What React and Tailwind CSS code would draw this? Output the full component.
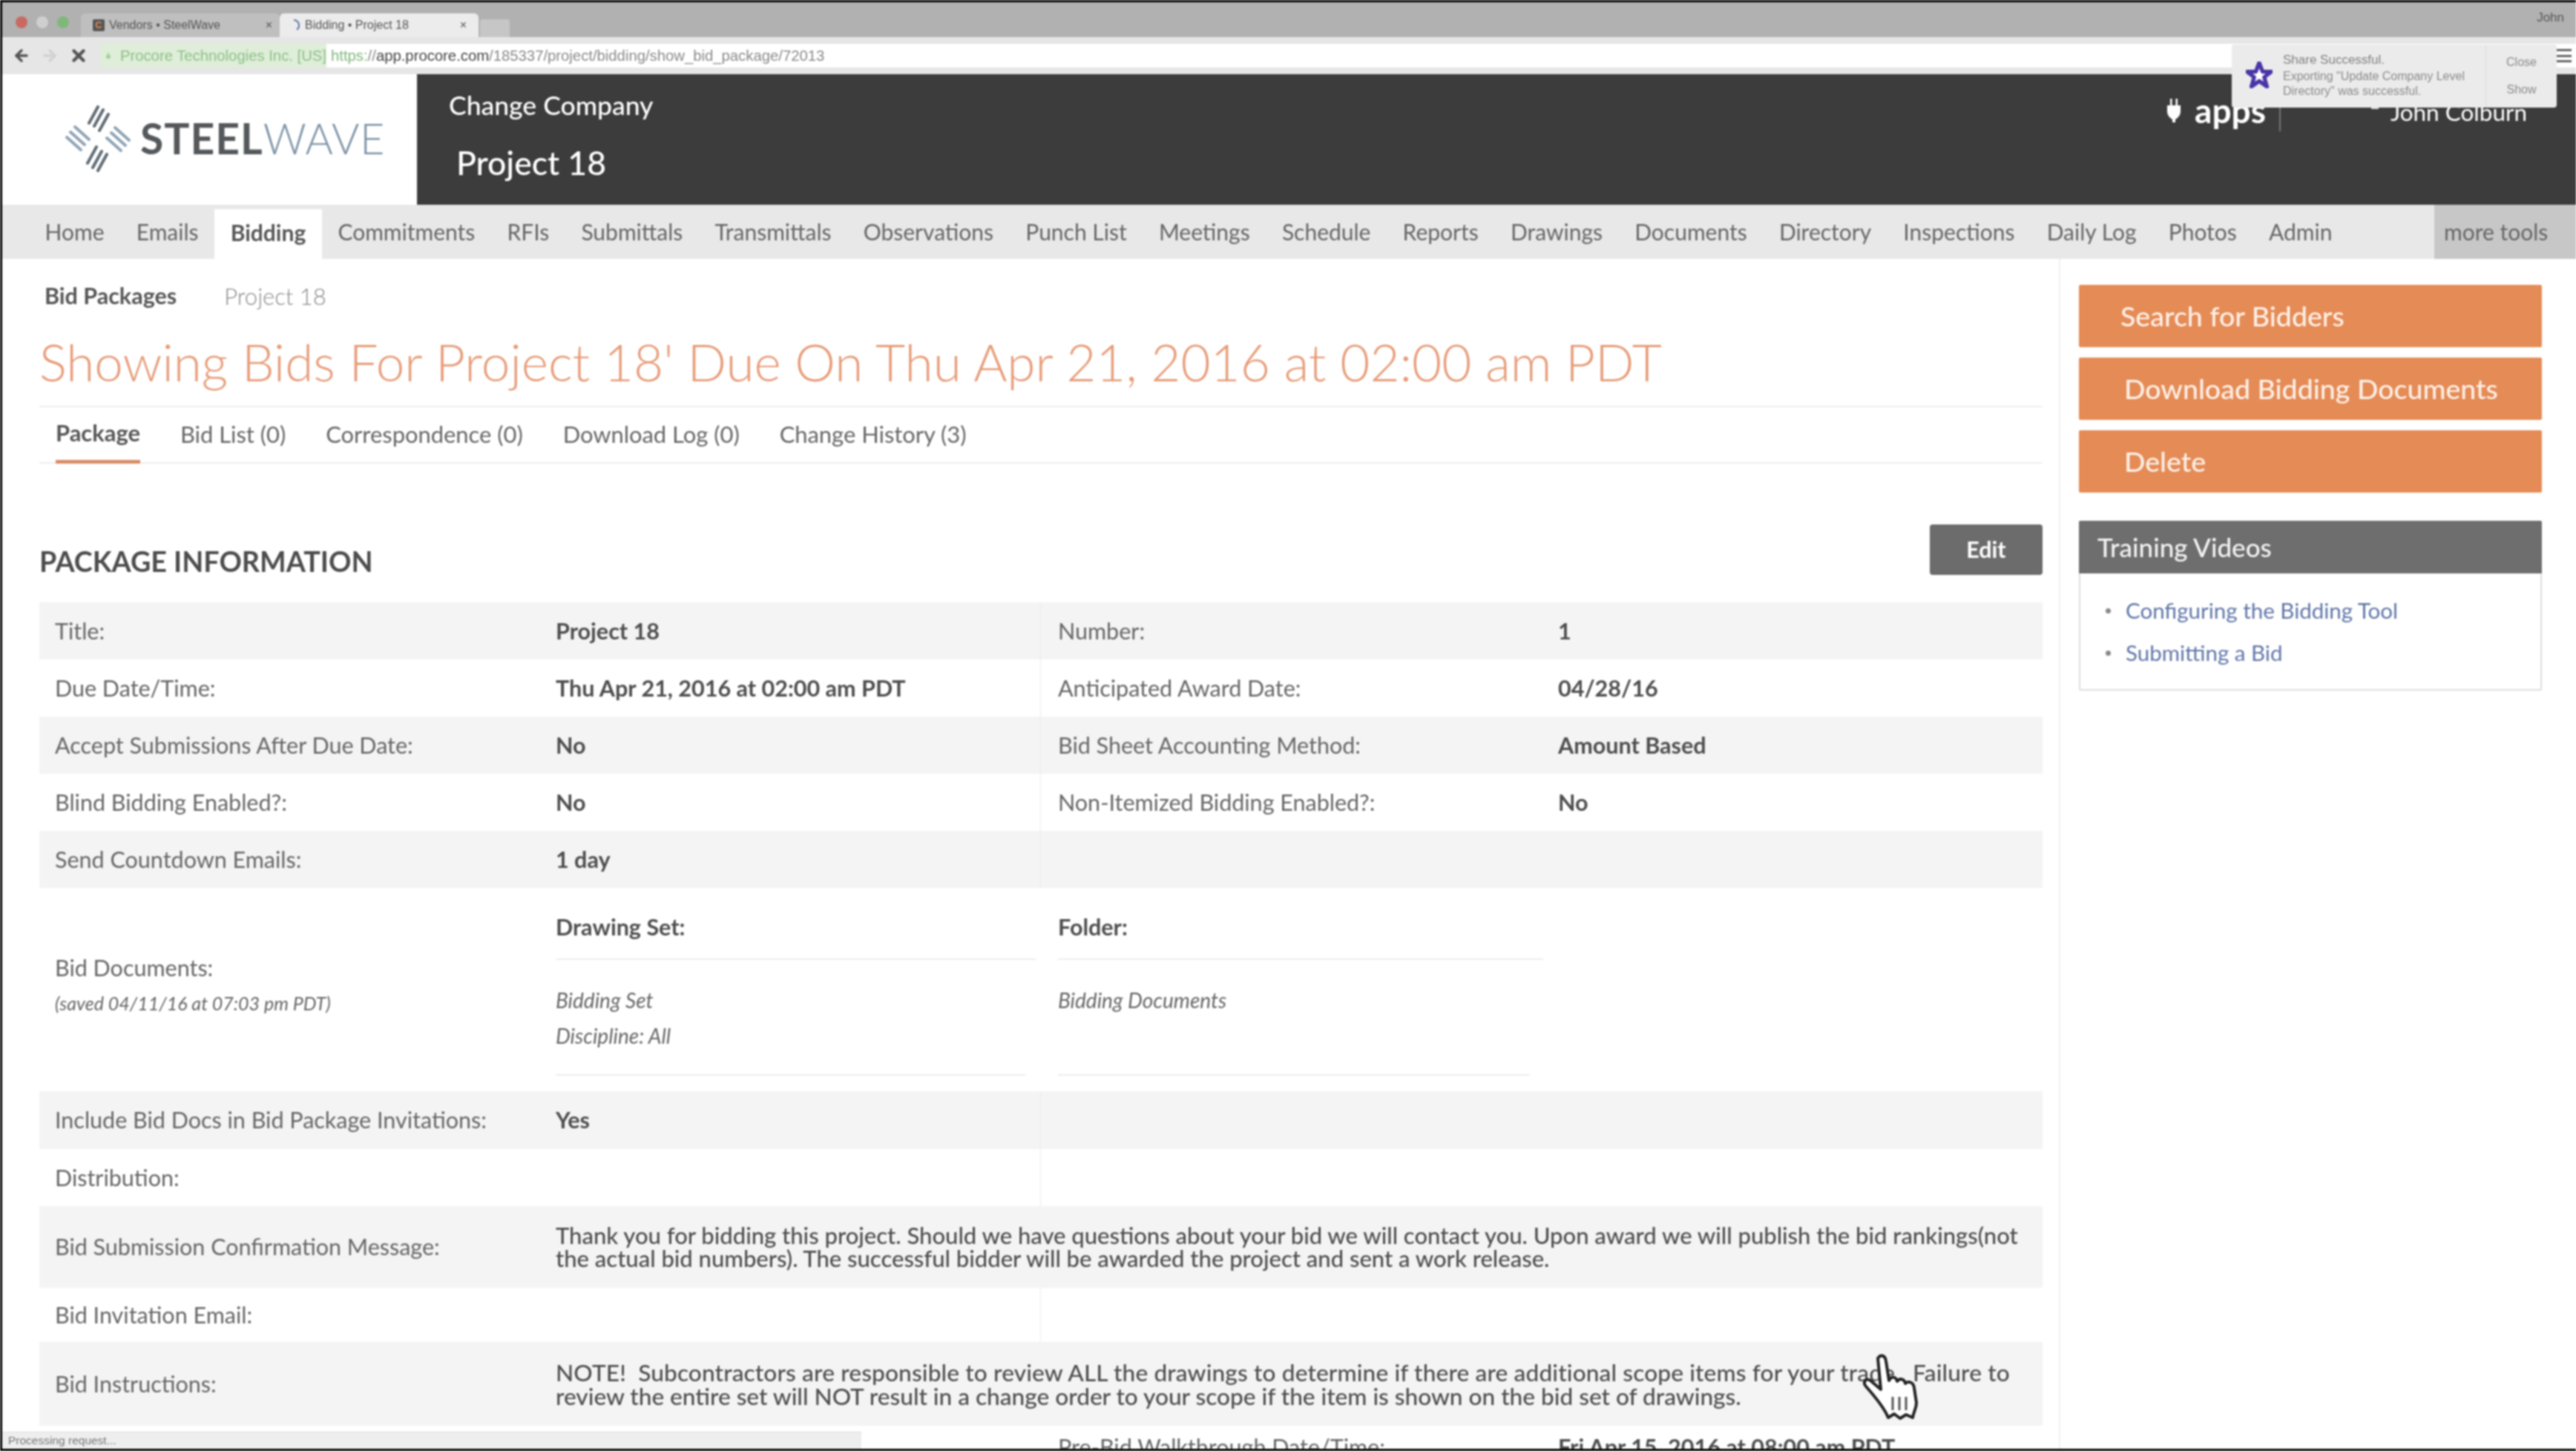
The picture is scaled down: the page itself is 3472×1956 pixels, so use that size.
import { ArrowLeft, ArrowRight, X } from "lucide-react";

const nav = ["Home","Emails","Bidding","Commitments","RFIs","Submittals","Transmittals","Observations","Punch List","Meetings","Schedule","Reports","Drawings","Documents","Directory","Inspections","Daily Log","Photos","Admin"];

function Logo() {
  return (
    <svg width="90" height="90" viewBox="0 0 90 90" className="shrink-0">
      <g stroke="#5f6b75" strokeWidth="4" strokeLinecap="round">
        <path d="M45 2 L33 24 M52 6 L40 28 M59 12 L47 34" />
        <path d="M45 88 L57 66 M38 84 L50 62 M31 78 L43 56" />
      </g>
      <g stroke="#8fa3b5" strokeWidth="4" strokeLinecap="round">
        <path d="M3 43 L22 60 M8 36 L27 53 M14 29 L33 46" />
        <path d="M87 47 L68 30 M82 54 L63 37 M76 61 L57 44" />
      </g>
    </svg>
  );
}

function Row({ gray, h = "h-[77px]", label, value, label2, value2 }) {
  return (
    <div className={`flex items-center ${h} ${gray ? "bg-[#f4f4f4]" : "bg-white"}`}>
      <div className="w-[696px] pl-[21px] shrink-0 text-[#666]">{label}</div>
      <div className="w-[654px] shrink-0 font-bold text-[#4d4d4d] self-stretch flex items-center border-r-[1px] border-[#ececec]">{value}</div>
      <div className="w-[697px] pl-[23px] shrink-0 text-[#666]">{label2}</div>
      <div className="font-bold text-[#4d4d4d]">{value2}</div>
    </div>
  );
}

function Hand() {
  return (
    <svg width="88" height="90" viewBox="0 0 88 90" className="absolute left-[2507px] top-[1825px]">
      <path d="M24 6 C28 0 34 2 35 10 L39 36 C42 30 48 30 50 37 C54 32 60 34 61 40 C65 36 72 38 73 46 L76 66 C76 74 72 78 71 86 L62 82 L54 87 L46 81 L38 86 C34 76 24 62 8 44 C3 38 8 32 14 36 L28 48 Z" fill="#fff" stroke="#222" strokeWidth="4" strokeLinejoin="round" />
      <path d="M44 58 V76 M53 58 V76 M62 58 V76" stroke="#555" strokeWidth="3" />
    </svg>
  );
}

export default function App() {
  return (
    <div className="relative w-[3472px] h-[1956px] overflow-hidden bg-white font-['Lato','Noto_Sans',sans-serif] text-[30.500px] blur-[1.200px]">
      <div className="border-t-[3px] border-l-[3px] border-b-[3px] border-black h-[1956px] flex flex-col overflow-hidden">
        {/* Browser chrome */}
        <div className="h-[47px] bg-[#b1b1b1] flex items-end pl-[18px] font-['Liberation_Sans',sans-serif] text-[16px] text-[#555] shrink-0">
          <div className="flex gap-[12px] w-[88px] pb-[12px]">
            <span className="size-[16px] rounded-full bg-[#c96a62]" />
            <span className="size-[16px] rounded-full bg-[#cfcfcf]" />
            <span className="size-[16px] rounded-full bg-[#7fb87a]" />
          </div>
          <div className="w-[268px] h-[32px] bg-[#bfbfbf] rounded-t-[6px] flex items-center pl-[16px] pr-[10px] justify-between">
            <span className="flex items-center gap-[6px]"><span className="size-[16px] bg-[#555] rounded-[2px] text-[#e58b56] text-[13px] leading-[16px] font-bold text-center">C</span>Vendors • SteelWave</span><span>×</span>
          </div>
          <div className="w-[268px] h-[32px] bg-[#ececec] rounded-t-[6px] flex items-center pl-[16px] pr-[16px] justify-between">
            <span className="flex items-center gap-[4px]">
              <svg width="14" height="16" viewBox="0 0 14 16"><path d="M3 1a7 7 0 0 1 7 7 7 7 0 0 1-3 6" fill="none" stroke="#5f75a8" strokeWidth="2" /></svg>
              Bidding • Project 18
            </span><span>×</span>
          </div>
          <div className="w-[40px] h-[24px] ml-[2px] bg-[#c6c6c6] rounded-t-[4px]" />
          <div className="ml-auto mr-[16px] pb-[14px] text-[17px]">John</div>
        </div>
        <div className="h-[50px] bg-[#e6e6e6] flex items-center font-['Liberation_Sans',sans-serif] shrink-0">
          <div className="w-[132px] flex items-center gap-[14px] pl-[14px] text-[#555]">
            <ArrowLeft size={24} strokeWidth={3.5} />
            <ArrowRight size={24} strokeWidth={3.5} className="text-[#d2d2d2]" />
            <X size={26} strokeWidth={4} />
          </div>
          <div className="flex-1 h-[32px] bg-white flex items-center text-[20.300px]">
            <div className="w-[305px] h-full bg-[#deeed8] flex items-center pl-[8px] gap-[13px] text-[#8fbf8a] whitespace-nowrap">
              <svg width="14" height="20" viewBox="0 0 14 20"><rect x="1" y="8" width="12" height="11" rx="1" fill="#9ccc92" /><path d="M4 8V5a3 3 0 0 1 6 0v3" fill="none" stroke="#9ccc92" strokeWidth="2" /></svg>
              Procore Technologies Inc. [US]
            </div>
            <span className="ml-[6px] text-[#8a8a8a]"><span className="text-[#7fb87a]">https:</span>//<span className="text-[#444]">app.procore.com</span>/185337/project/bidding/show_bid_package/72013</span>
          </div>
        </div>
        {/* Header */}
        <div className="h-[176px] flex shrink-0">
          <div className="w-[559px] bg-white flex items-center pl-[84px] gap-[12px] shrink-0 pb-[2px]">
            <Logo />
            <span className="text-[57px] tracking-[1px] font-bold text-[#55595c]">STEEL<span className="font-light text-[#7d93a6]">WAVE</span></span>
          </div>
          <div className="flex-1 bg-[#3c3c3d] flex text-white pr-[66px]">
            <div className="pl-[43px] pt-[17px]">
              <div className="text-[35.500px] leading-[50px] font-medium">Change Company</div>
              <div className="text-[44.500px] leading-[60px] pl-[10px] mt-[22px] font-medium">Project 18</div>
            </div>
            <div className="ml-auto flex items-start pt-[23px] gap-[18px]">
              <svg width="20" height="32" viewBox="0 0 20 32" className="mt-[10px]"><path d="M5 0h2.500v9h5V0H15v9h4v8c0 6-4 9-7 11v4H8v-4C5 26 1 23 1 17V9h4z" fill="#fff" /></svg>
              <span className="text-[46px] leading-[52px] font-bold">apps</span>
              <span className="w-[2px] h-[36px] bg-[#777] mt-[18px]" />
              <span className="size-[10px] bg-[#ddd] ml-[104px] mt-[14px]" />
              <span className="text-[31.500px] leading-[52px] -ml-[2px] mt-[2px]">John Colburn</span>
            </div>
          </div>
        </div>
        {/* Nav */}
        <div className="h-[73px] bg-[#e8e8e8] flex text-[#666] text-[30px] shrink-0 pl-[36px]">
          {nav.map((n) => (
            <div key={n} className={n === "Bidding" ? "mt-[6px] -mb-[2px] bg-white font-bold px-[21.600px] flex items-center text-[#555] pb-[6px]" : "px-[21.600px] flex items-center whitespace-nowrap"}>{n}</div>
          ))}
          <div className="ml-auto w-[191px] bg-[#c7c7c7] flex items-center pl-[13px]">more tools</div>
        </div>
        {/* Body */}
        <div className="flex flex-1 min-h-0">
          <div className="w-[2774px] shrink-0 border-r-[2px] border-[#efefef] pl-[50px] pr-[22px]">
            <div className="flex items-center h-[60px] mt-[20px] pl-[7px]">
              <span className="font-bold text-[#555]">Bid Packages</span>
              <span className="ml-[64px] font-light text-[#888] text-[31px]">Project 18</span>
            </div>
            <div className="h-[120px] flex items-center border-b-[2px] border-[#eee] font-light text-[69.200px] text-[#e79a76] whitespace-nowrap">Showing Bids For Project 18' Due On Thu Apr 21, 2016 at 02:00 am PDT</div>
            <div className="flex h-[76px] border-b-[2px] border-[#eee] pl-[22px] gap-[54px] text-[#666] text-[30.900px]">
              <div className="font-bold text-[#555] h-[76px] border-b-[5px] border-[#d98d66] flex items-center">Package</div>
              <div className="flex items-center">Bid List (0)</div>
              <div className="flex items-center">Correspondence (0)</div>
              <div className="flex items-center">Download Log (0)</div>
              <div className="flex items-center">Change History (3)</div>
            </div>
            <div className="flex items-end justify-between h-[187px] pb-[37px]">
              <div className="text-[37.700px] font-bold text-[#4d4d4d] leading-[44px] mb-[-4px]">PACKAGE INFORMATION</div>
              <div className="w-[152px] h-[68px] bg-[#6c6c6c] rounded-[4px] text-white font-bold flex items-center justify-center">Edit</div>
            </div>
            <Row gray label="Title:" value="Project 18" label2="Number:" value2="1" />
            <Row label="Due Date/Time:" value="Thu Apr 21, 2016 at 02:00 am PDT" label2="Anticipated Award Date:" value2="04/28/16" />
            <Row gray label="Accept Submissions After Due Date:" value="No" label2="Bid Sheet Accounting Method:" value2="Amount Based" />
            <Row label="Blind Bidding Enabled?:" value="No" label2="Non-Itemized Bidding Enabled?:" value2="No" />
            <Row gray label="Send Countdown Emails:" value="1 day" />
            <div className="flex h-[274px] bg-white">
              <div className="w-[696px] pl-[21px] shrink-0 text-[#666] flex flex-col justify-center pb-[14px]">
                <div>Bid Documents:</div>
                <div className="italic text-[25px] mt-[6px] text-[#666]">(saved 04/11/16 at 07:03 pm PDT)</div>
              </div>
              <div className="w-[677px] shrink-0">
                <div className="font-bold text-[#4d4d4d] h-[97px] pt-[30px] mr-[30px] border-b-[2px] border-[#eee]">Drawing Set:</div>
                <div className="italic text-[28px] text-[#666] h-[156px] pt-[30px] mr-[44px] leading-[48px] border-b-[2px] border-[#eee]">Bidding Set<br />Discipline: All</div>
              </div>
              <div className="w-[674px] shrink-0">
                <div className="font-bold text-[#4d4d4d] h-[97px] pt-[30px] mr-[20px] border-b-[2px] border-[#eee]">Folder:</div>
                <div className="italic text-[28px] text-[#666] h-[156px] pt-[30px] mr-[38px] leading-[48px] border-b-[2px] border-[#eee]">Bidding Documents</div>
              </div>
            </div>
            <Row gray h="h-[78px]" label="Include Bid Docs in Bid Package Invitations:" value="Yes" />
            <Row label="Distribution:" />
            <div className="flex items-center h-[110px] bg-[#f4f4f4]">
              <div className="w-[696px] pl-[21px] shrink-0 text-[#666]">Bid Submission Confirmation Message:</div>
              <div className="font-medium text-[#4d4d4d] text-[31px] leading-[31px] whitespace-nowrap">Thank you for bidding this project. Should we have questions about your bid we will contact you. Upon award we will publish the bid rankings(not<br />the actual bid numbers). The successful bidder will be awarded the project and sent a work release.</div>
            </div>
            <Row h="h-[73px]" label="Bid Invitation Email:" />
            <div className="flex items-center h-[113px] bg-[#f4f4f4]">
              <div className="w-[696px] pl-[21px] shrink-0 text-[#666]">Bid Instructions:</div>
              <div className="font-medium text-[#4d4d4d] text-[31.600px] leading-[32px] whitespace-nowrap"><span className="tracking-[0.150px]">NOTE!&nbsp; Subcontractors are responsible to review ALL the drawings to determine if there are additional scope items for your trade.&nbsp; Failure to</span><br />review the entire set will NOT result in a change order to your scope if the item is shown on the bid set of drawings.</div>
            </div>
            <div className="flex h-[40px] pt-[8px] leading-[40px]">
              <div className="w-[1373px] shrink-0" />
              <div className="w-[674px] shrink-0 text-[#666]">Pre-Bid Walkthrough Date/Time:</div>
              <div className="font-bold text-[#4d4d4d]">Fri Apr 15, 2016 at 08:00 am PDT</div>
            </div>
          </div>
          <div className="flex-1 pl-[25px] pr-[46px] pt-[35px]">
            <div className="flex flex-col gap-[14px] text-[37.500px] font-medium text-[#fdf1e8]">
              <div className="h-[84px] bg-[#e58b56] rounded-[2px] flex items-center pl-[56px]">Search for Bidders</div>
              <div className="h-[84px] bg-[#e58b56] rounded-[2px] flex items-center pl-[61px]">Download Bidding Documents</div>
              <div className="h-[84px] bg-[#e58b56] rounded-[2px] flex items-center pl-[61px]">Delete</div>
            </div>
            <div className="mt-[38px] border-[2px] border-[#ddd] rounded-[2px] h-[229px]">
              <div className="h-[71px] -m-[2px] bg-[#6e6e6e] rounded-t-[2px] flex items-center pl-[25px] text-[35px] font-medium text-[#f4f4f4]">Training Videos</div>
              <ul className="pt-[34px] pl-[34px] text-[29.500px] text-[#5f75a8] flex flex-col gap-[21px] leading-[36px]">
                <li className="flex items-center gap-[20px]"><span className="size-[7px] rounded-full bg-[#888]" />Configuring the Bidding Tool</li>
                <li className="flex items-center gap-[20px]"><span className="size-[7px] rounded-full bg-[#888]" />Submitting a Bid</li>
              </ul>
            </div>
          </div>
        </div>
      </div>

      {/* Notification */}
      <div className="absolute left-[3008px] top-[60px] w-[438px] h-[85px] bg-[#ebebeb] rounded-[4px] flex font-['Liberation_Sans',sans-serif] text-[#8a8a8a]">
        <svg width="36" height="36" viewBox="0 0 24 24" className="ml-[19px] mt-[23px] shrink-0"><path d="M12 1l3 8h8l-6.500 5 2.500 8.500L12 17.500 5 22.500 7.500 14 1 9h8z" fill="#fff" stroke="#4a35a8" strokeWidth="3.500" strokeLinejoin="round" /></svg>
        <div className="ml-[14px] pt-[11px] w-[273px] text-[17px] leading-[20px]">
          <div className="text-[#808080] mb-[2px]">Share Successful.</div>
          <div className="text-[16px]">Exporting "Update Company Level</div>
          <div className="text-[16px]">Directory" was successful.</div>
        </div>
        <div className="border-l-[1px] border-[#ddd] flex-1 flex flex-col text-[16px] items-center justify-between py-[12px]">
          <span>Close</span><span>Show</span>
        </div>
      </div>
      <div className="absolute left-[3446px] top-[66px] w-[20px] h-[18px] border-y-[3px] border-[#666] flex items-center"><div className="w-full h-[3px] bg-[#666]" /></div>

      {/* Status bubble */}
      <div className="absolute left-[3px] top-[1930px] w-[1158px] h-[23px] bg-[#eeeeee] border-t-[1px] border-[#ddd] pl-[8px] text-[15.500px] leading-[22px] text-[#777] font-['Liberation_Sans',sans-serif]">Processing request...</div>

      <Hand />
    </div>
  );
}
